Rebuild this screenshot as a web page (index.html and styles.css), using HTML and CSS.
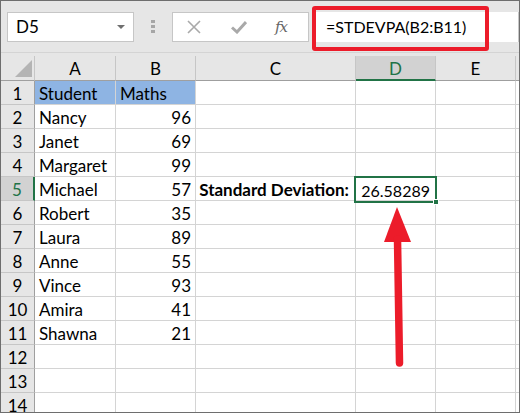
FILE: index.html
```html
<!DOCTYPE html>
<html>
<head>
<meta charset="utf-8">
<link rel="stylesheet" href="styles.css">
</head>
<body>
<div class="frame">
  <div class="toolbar">
    <div class="namebox">
      <span class="name">D5</span>
      <span class="caret"></span>
    </div>
    <div class="grip"><i></i><i></i><i></i></div>
    <div class="fnbox">
      <svg class="ico" width="14" height="14" viewBox="0 0 14 14"><path d="M1 1 L13 13 M13 1 L1 13" stroke="#a9a9a9" stroke-width="1.6" fill="none"/></svg>
      <svg class="ico" width="16" height="14" viewBox="0 0 16 14"><path d="M1 7.5 L6 12 L15 2" stroke="#a9a9a9" stroke-width="3" fill="none"/></svg>
      <span class="fx">fx</span>
    </div>
    <div class="formula">=STDEVPA(B2:B11)</div>
  </div>
  <div class="sheet">
    <div class="corner"><span class="tri"></span></div>
    <div class="ch">A</div><div class="ch">B</div><div class="ch">C</div><div class="ch sel">D</div><div class="ch">E</div><div class="ch end"></div>

    <div class="rh">1</div><div class="c hd">Student</div><div class="c hd">Maths</div><div class="c"></div><div class="c"></div><div class="c"></div><div class="c end"></div>
    <div class="rh">2</div><div class="c">Nancy</div><div class="c n">96</div><div class="c"></div><div class="c"></div><div class="c"></div><div class="c end"></div>
    <div class="rh">3</div><div class="c">Janet</div><div class="c n">69</div><div class="c"></div><div class="c"></div><div class="c"></div><div class="c end"></div>
    <div class="rh">4</div><div class="c">Margaret</div><div class="c n">99</div><div class="c"></div><div class="c"></div><div class="c"></div><div class="c end"></div>
    <div class="rh sel">5</div><div class="c">Michael</div><div class="c n">57</div><div class="c n b">Standard Deviation:</div><div class="c n v">26.58289</div><div class="c"></div><div class="c end"></div>
    <div class="rh">6</div><div class="c">Robert</div><div class="c n">35</div><div class="c"></div><div class="c"></div><div class="c"></div><div class="c end"></div>
    <div class="rh">7</div><div class="c">Laura</div><div class="c n">89</div><div class="c"></div><div class="c"></div><div class="c"></div><div class="c end"></div>
    <div class="rh">8</div><div class="c">Anne</div><div class="c n">55</div><div class="c"></div><div class="c"></div><div class="c"></div><div class="c end"></div>
    <div class="rh">9</div><div class="c">Vince</div><div class="c n">93</div><div class="c"></div><div class="c"></div><div class="c"></div><div class="c end"></div>
    <div class="rh">10</div><div class="c">Amira</div><div class="c n">41</div><div class="c"></div><div class="c"></div><div class="c"></div><div class="c end"></div>
    <div class="rh">11</div><div class="c">Shawna</div><div class="c n">21</div><div class="c"></div><div class="c"></div><div class="c"></div><div class="c end"></div>
    <div class="rh">12</div><div class="c"></div><div class="c"></div><div class="c"></div><div class="c"></div><div class="c"></div><div class="c end"></div>
    <div class="rh">13</div><div class="c"></div><div class="c"></div><div class="c"></div><div class="c"></div><div class="c"></div><div class="c end"></div>
    <div class="rh">14</div><div class="c"></div><div class="c"></div><div class="c"></div><div class="c"></div><div class="c"></div><div class="c end"></div>
  </div>

  <div class="redbox"></div>
  <div class="selbox"><span class="handle"></span></div>
  <svg class="arrow" width="40" height="170" viewBox="0 0 40 170">
    <polygon points="17,0 4,35 31,35" fill="#ec1c2a"/>
    <path d="M17.5 32 L19.5 156" stroke="#ec1c2a" stroke-width="7.5" stroke-linecap="round" fill="none"/>
  </svg>
</div>
</body>
</html>
```

FILE: styles.css
```css
* { box-sizing: border-box; }
html, body { margin: 0; padding: 0; }
body {
  width: 520px;
  height: 413px;
  overflow: hidden;
  font-family: Lato, "Open Sans", sans-serif;
  color: #000;
}
.frame {
  position: relative;
  width: 520px;
  height: 413px;
  border: 1px solid #6e6e6e;
  background: #e6e6e6;
  overflow: hidden;
}
.toolbar {
  height: 52px;
  display: flex;
  align-items: center;
  padding: 0 0 0 6px;
  border-bottom: 1px solid #d4d4d4;
}
.namebox {
  width: 127px;
  height: 30px;
  background: #fff;
  border: 1px solid #c6c6c6;
  display: flex;
  align-items: center;
  justify-content: space-between;
  padding: 0 8px 0 8px;
}
.name { font-size: 17px; color: #000; }
.caret {
  width: 0; height: 0;
  border-left: 4px solid transparent;
  border-right: 4px solid transparent;
  border-top: 4px solid #6f6f6f;
}
.grip {
  width: 38px;
  display: flex;
  flex-direction: column;
  align-items: center;
  gap: 2px;
}
.grip i {
  display: block;
  width: 4px; height: 3px;
  background: #a6a6a6;
}
.fnbox {
  width: 137px;
  height: 30px;
  background: #fff;
  border: 1px solid #c6c6c6;
  display: flex;
  align-items: center;
  padding-left: 14px;
  gap: 30px;
}
.fnbox .ico { display: block; }
.fx {
  font-family: "DejaVu Serif", "Liberation Serif", serif;
  font-style: italic;
  font-size: 15px;
  color: #666;
  margin-left: -2px;
  letter-spacing: -1px;
}
.formula {
  margin-left: 4px;
  flex: 1;
  height: 30px;
  background: #fff;
  border-right: 1px solid #c6c6c6;
  display: flex;
  align-items: center;
  padding-left: 13px;
  font-size: 16px;
}
.sheet {
  margin-top: 3px;
  display: grid;
  grid-template-columns: 34px 81px 80px 160px 80px 80px 1fr;
  grid-template-rows: 25px repeat(14, 24px);
  font-size: 17px;
}
.corner {
  border-right: 1px solid #c6c6c6;
  border-bottom: 1px solid #9f9f9f;
  position: relative;
}
.tri {
  position: absolute;
  right: 2px;
  bottom: 3px;
  width: 0; height: 0;
  border-left: 17px solid transparent;
  border-bottom: 17px solid #b4b4b4;
}
.ch {
  border-right: 1px solid #c6c6c6;
  border-bottom: 1px solid #9f9f9f;
  display: flex;
  align-items: center;
  justify-content: center;
  padding-top: 1px;
}
.ch.end { border-right: none; }
.ch.sel {
  background: #d2d2d2;
  color: #217346;
  border-bottom: 2px solid #217346;
}
.rh {
  border-right: 1px solid #9f9f9f;
  border-bottom: 1px solid #c6c6c6;
  display: flex;
  align-items: flex-end;
  justify-content: center;
  padding-bottom: 0;
}
.rh.sel {
  background: #d2d2d2;
  color: #217346;
  border-right: 2px solid #217346;
}
.c {
  background: #fff;
  border-right: 1px solid #d4d4d4;
  border-bottom: 1px solid #d4d4d4;
  display: flex;
  align-items: flex-end;
  padding: 0 4px 0 4px;
  white-space: nowrap;
}
.c.end { border-right: none; }
.c.hd { background: #8eb4e3; }
.c.n { justify-content: flex-end; }
.c.b { font-weight: 700; padding-right: 6px; }
.c.v { font-size: 16px; padding-right: 5px; }

.redbox {
  position: absolute;
  left: 311px;
  top: 5px;
  width: 177px;
  height: 45px;
  border: 4.5px solid #ec1c2a;
  border-radius: 3px;
}
.selbox {
  position: absolute;
  left: 353px;
  top: 175px;
  width: 83px;
  height: 27px;
  border: 2px solid #217346;
}
.handle {
  position: absolute;
  right: -4px;
  bottom: -4px;
  width: 6px;
  height: 6px;
  background: #217346;
  border: 1px solid #fff;
}
.arrow {
  position: absolute;
  left: 379px;
  top: 206px;
}
```
